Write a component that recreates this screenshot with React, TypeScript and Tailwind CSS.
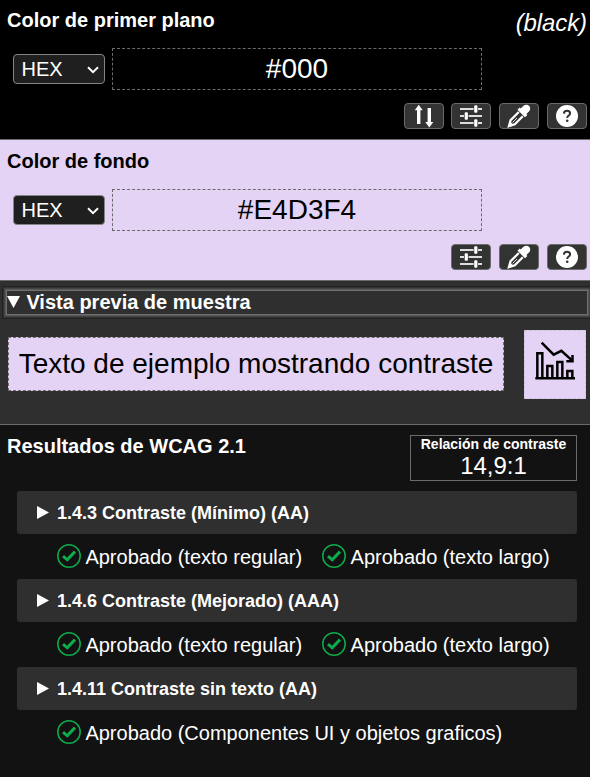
import React from 'react';

function ToolButton({ label, children }: { label: string; children: React.ReactNode }) {
  return (
    <button
      aria-label={label}
      className="h-[26px] w-10 rounded-[4px] border border-[#6b6b6b] bg-[#333333] text-white"
    >
      <svg viewBox="1 1 38 24" className="block h-6 w-[38px]" fill="currentColor">
        {children}
      </svg>
    </button>
  );
}

function SwapButton() {
  return (
    <ToolButton label="Intercambiar colores">
      <path d="M14.7 1.8 L18.700 7.200 H16.400 V21 H13 V7.200 H10.700Z" />
      <path d="M25.3 24.400 L21.300 19 H23.600 V5 H27 V19 H29.300Z" />
    </ToolButton>
  );
}

function SlidersButton() {
  return (
    <ToolButton label="Controles deslizantes">
      <path
        d="M9 6h13.600M27 6H31M9 13h4M17.600 13H31M9 20h13.600M27 20H31"
        stroke="#dddddd"
        strokeWidth="2"
      />
      <rect x="23.2" y="2.2" width="3.2" height="7.6" rx="1" />
      <rect x="13.7" y="9.2" width="3.2" height="7.6" rx="1" />
      <rect x="23.2" y="16.2" width="3.2" height="7.6" rx="1" />
    </ToolButton>
  );
}

function DropperButton() {
  return (
    <ToolButton label="Cuentagotas">
      <path d="M21.8 5.4 L24.2 3 C26 1.400 28.800 1.400 30.200 2.900 C31.700 4.400 31.600 7 29.900 8.600 L27.400 11 L28.400 12 L26 14.200 L18.500 6.800 L20.700 4.500Z" />
      <path
        d="M19.8 9 L11.600 17.200 L9.900 23.100 L15.800 21.200 L23.800 13.200"
        fill="none"
        stroke="currentColor"
        strokeWidth="2.2"
      />
      <path d="M8.8 24.500 L11.200 18.400 L15 22.200Z" />
      <path d="M13.6 19.400 L18 15" stroke="#dddddd" strokeWidth="1" />
    </ToolButton>
  );
}

function HelpButton() {
  return (
    <ToolButton label="Ayuda">
      <circle cx="20" cy="13" r="11" />
      <path
        d="M16.9 10.6 C17 8.6 18.3 7.8 20 7.8 C21.8 7.8 23.1 8.8 23.1 10.4 C23.1 12.6 20.2 12.5 20.2 15"
        fill="none"
        stroke="#333333"
        strokeWidth="2"
      />
      <circle cx="20.2" cy="17.8" r="1.3" fill="#333333" />
    </ToolButton>
  );
}

function FormatSelect() {
  return (
    <button className="flex h-[30px] w-[92px] items-center justify-between rounded-[4px] border border-[#858585] bg-[#1f1f1f] pr-[5px] pl-[7.5px] text-[20px] leading-7 text-white">
      HEX
      <svg viewBox="0 0 12 8" className="mt-px h-2 w-3" fill="none" stroke="currentColor" strokeWidth="2">
        <path d="M1 1.2 L6 6.2 L11 1.2" />
      </svg>
    </button>
  );
}

function ColorRow({ value }: { value: string }) {
  return (
    <div className="flex items-center gap-[7px] pl-[13px]">
      <FormatSelect />
      <div className="h-[42px] w-[370px] border border-dashed border-[#6b6b6b] text-center text-[28px] leading-[39px]">
        {value}
      </div>
    </div>
  );
}

function CheckIcon() {
  return (
    <svg viewBox="0 0 24 24" className="h-6 w-6 shrink-0" fill="none" stroke="#0cad4b">
      <circle cx="12" cy="12" r="11.2" strokeWidth="1.5" />
      <path d="M6 12.2 L10.2 15.8 L18 7.6" strokeWidth="3" />
    </svg>
  );
}

function Criterion({ title, results }: { title: string; results: string[] }) {
  return (
    <div>
      <div className="flex h-[43px] items-center rounded-[3px] bg-[#2f2f2f] pl-5">
        <svg viewBox="0 0 12 13" className="h-[13px] w-3" fill="#ffffff">
          <path d="M0 0 L12 6.5 L0 13Z" />
        </svg>
        <span className="pl-2 text-[18px] leading-6 font-bold">{title}</span>
      </div>
      <div className="flex h-[45px] items-start gap-5 pt-[10px] pl-10">
        {results.map((r) => (
          <div key={r} className="flex items-start gap-[4.4px]">
            <CheckIcon />
            <span className="text-[20px] leading-[26px] whitespace-nowrap">{r}</span>
          </div>
        ))}
      </div>
    </div>
  );
}

export default function App() {
  return (
    <div className="h-[777px] w-[590px] overflow-hidden bg-[#121212] font-['Liberation_Sans',Arial,sans-serif] text-white">
      <section className="h-[140px] border-b border-[#6b6b6b] bg-black pt-2">
        <div className="flex h-10 justify-between pr-[3px] pl-[7px]">
          <h2 className="text-[20px] leading-6 font-bold">Color de primer plano</h2>
          <span className="text-[24px] leading-[30px] tracking-[-0.1px] italic">(black)</span>
        </div>
        <ColorRow value="#000" />
        <div className="flex justify-end gap-2 pt-[13px] pr-[3px]">
          <div className="-mr-px">
            <SwapButton />
          </div>
          <SlidersButton />
          <DropperButton />
          <HelpButton />
        </div>
      </section>

      <section className="h-[141px] border-b border-[#6b6b6b] bg-[#e4d3f4] pt-[9px] text-black">
        <h2 className="h-10 pl-[7px] text-[20px] leading-6 font-bold">Color de fondo</h2>
        <ColorRow value="#E4D3F4" />
        <div className="flex justify-end gap-2 pt-[13px] pr-[3px]">
          <SlidersButton />
          <DropperButton />
          <HelpButton />
        </div>
      </section>

      <section className="h-[144px] border-b border-[#6b6b6b] bg-[#2f2f2f] pt-[10px]">
        <div className="mr-[3px] ml-[7px] flex h-[23px] items-start shadow-[0_0_0_1px_#707070,0_0_0_2px_#565656,0_0_0_3px_#444444,0_0_0_4px_#323232,0_0_0_5px_#222222]">
          <svg viewBox="0 0 13 12" className="mt-[5px] h-3 w-[13px]" fill="#ffffff">
            <path d="M0 0 H13 L6.5 12Z" />
          </svg>
          <h2 className="pl-[6.4px] text-[20px] leading-[22px] font-bold">Vista previa de muestra</h2>
        </div>
        <div className="flex items-start justify-between pt-4 pr-1 pl-2">
          <div className="mt-[7px] h-[54px] w-[496px] border border-dashed border-[#6b6b6b] bg-[#e4d3f4] text-center text-[28px] leading-[51px] whitespace-nowrap text-black">
            Texto de ejemplo mostrando contraste
          </div>
          <div className="h-[69px] w-[62px] border border-dashed border-[#d0c3dc] bg-[#e4d3f4]">
            <svg
              viewBox="75 33 180 201"
              className="h-[67px] w-[60px]"
              fill="none"
              stroke="#000000"
              strokeWidth="7.5"
            >
              <path d="M106 175 H225" />
              <path d="M112 175 V100 H127 V175" />
              <path d="M142 175 V138 H157 V175" />
              <path d="M172 175 V126 H187 V175" />
              <path d="M202 175 V153 H217 V175" />
              <path d="M125 68 L161 104 L184 92.500 L216 121" />
              <path d="M217.500 105 V123.500 H199" />
            </svg>
          </div>
        </div>
      </section>

      <section className="pt-[9px]">
        <div className="flex h-[57px] justify-between pr-[13px] pl-[7px]">
          <h2 className="text-[20px] leading-6 font-bold">Resultados de WCAG 2.1</h2>
          <div className="mt-px h-[46px] w-[167px] border border-[#6b6b6b] text-center">
            <div className="text-[14px] leading-4 font-bold">Relación de contraste</div>
            <div className="text-[24px] leading-[27px]">14,9:1</div>
          </div>
        </div>
        <div className="pr-[13px] pl-[17px]">
          <Criterion
            title="1.4.3 Contraste (Mínimo) (AA)"
            results={['Aprobado (texto regular)', 'Aprobado (texto largo)']}
          />
          <Criterion
            title="1.4.6 Contraste (Mejorado) (AAA)"
            results={['Aprobado (texto regular)', 'Aprobado (texto largo)']}
          />
          <Criterion
            title="1.4.11 Contraste sin texto (AA)"
            results={['Aprobado (Componentes UI y objetos graficos)']}
          />
        </div>
      </section>
    </div>
  );
}
